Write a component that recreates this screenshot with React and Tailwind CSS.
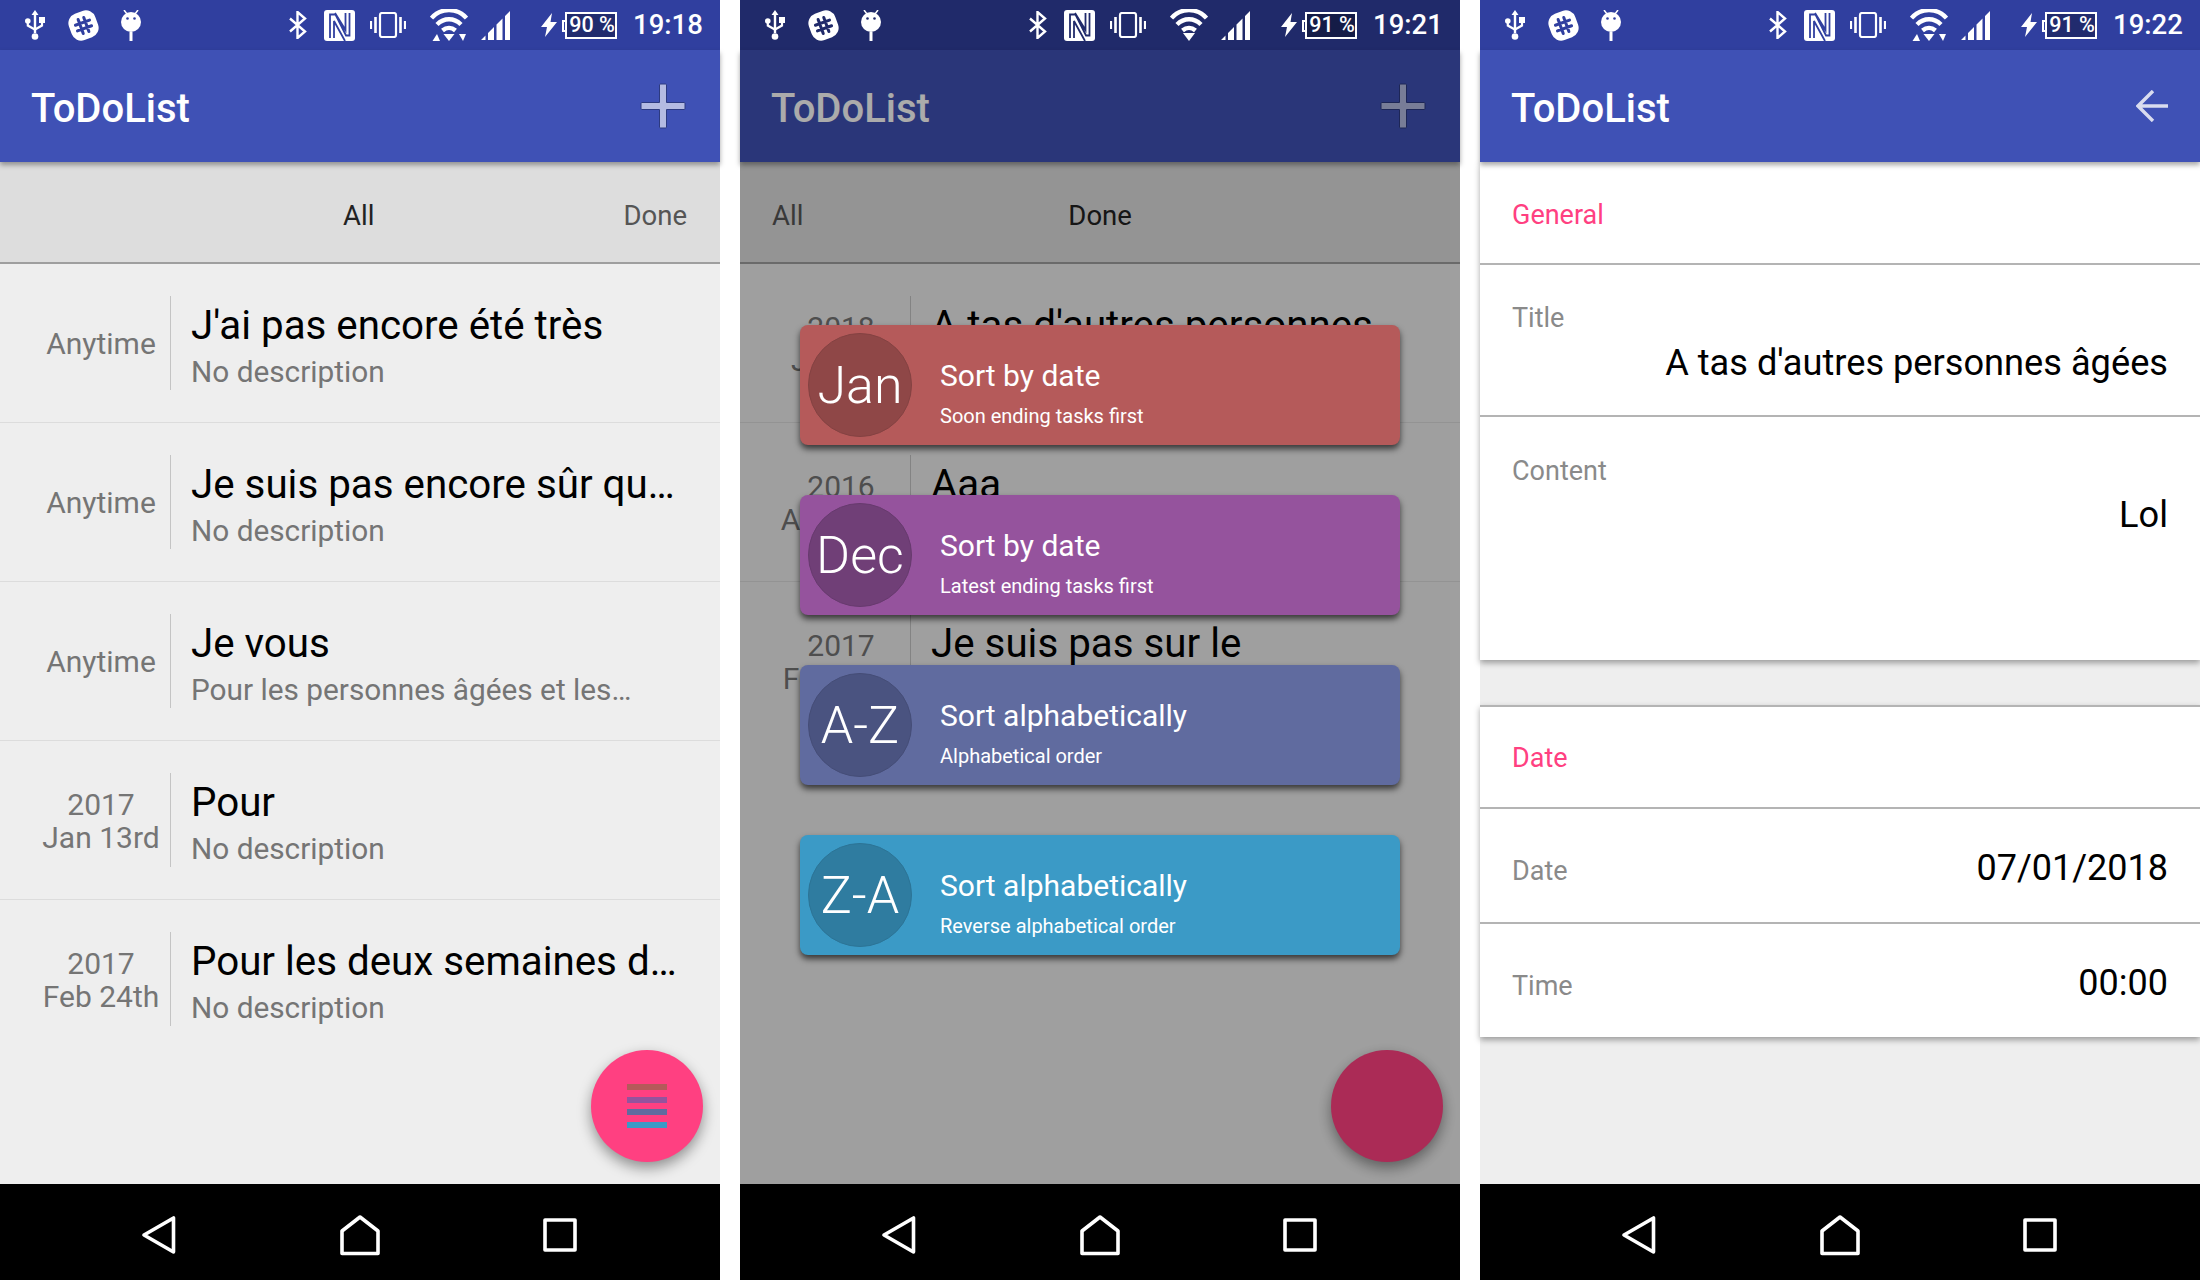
import React from "react";

const Usb = () => (
  <svg width="20" height="30" viewBox="0 0 20 30" className="ml-[25px] shrink-0">
    <path d="M10 0l3.500 5h-2.300v18h-2.400V5H6.500z" fill="#fff" />
    <circle cx="10" cy="26.500" r="3.300" fill="#fff" />
    <circle cx="2.800" cy="11" r="2.800" fill="#fff" />
    <rect x="14" y="7" width="6" height="6" fill="#fff" />
    <path d="M2.800 12v3.500l7 4M17 12v3.500l-7 4" stroke="#fff" strokeWidth="2.200" fill="none" />
  </svg>
);

const Slack = ({ bg }) => (
  <svg width="31" height="31" viewBox="0 0 31 31" className="ml-[23px] shrink-0">
    <rect x="1.500" y="1.500" width="28" height="28" rx="10" fill="#fff" transform="rotate(-20 15.500 15.500)" />
    <g transform="rotate(-20 15.500 15.500)" stroke={bg} strokeWidth="3" strokeLinecap="round">
      <path d="M12.500 8v15M18.500 8v15M8 12.500h15M8 18.500h15" />
    </g>
  </svg>
);

const Droid = ({ bg }) => (
  <svg width="20" height="31" viewBox="0 0 20 31" className="ml-[22px] shrink-0">
    <path d="M3 0l3 4M17 0l-3 4" stroke="#fff" strokeWidth="1.500" />
    <circle cx="10" cy="12" r="10" fill="#fff" />
    <circle cx="6.500" cy="8.500" r="1.300" fill={bg} />
    <circle cx="13.500" cy="8.500" r="1.300" fill={bg} />
    <rect x="8.500" y="22" width="3" height="9" fill="#fff" />
  </svg>
);

const Bluetooth = () => (
  <svg width="18" height="28" viewBox="0 0 18 28" className="shrink-0">
    <path d="M1 7.500l15 13-7.500 6.500V1l7.500 6.500-15 13" stroke="#fff" strokeWidth="2.400" fill="none" />
  </svg>
);

const Nfc = ({ bg }) => (
  <svg width="31" height="31" viewBox="0 0 31 31" className="ml-[17px] shrink-0">
    <rect width="31" height="31" rx="3" fill="#fff" />
    <path d="M6 28V4.500h5.500L22 25.500h3.500V3M10 28V11l11 20M21.500 3v17L11 3" stroke={bg} strokeWidth="1.800" fill="none" />
  </svg>
);

const Vibrate = () => (
  <svg width="36" height="26" viewBox="0 0 36 26" className="ml-[15px] shrink-0">
    <rect x="10" y="1" width="16" height="24" rx="2" stroke="#fff" strokeWidth="2.200" fill="none" />
    <path d="M5.500 5v16M30.500 5v16" stroke="#fff" strokeWidth="2.600" />
    <path d="M1 9v8M35 9v8" stroke="#fff" strokeWidth="2.200" />
  </svg>
);

const Wifi = ({ arrows }) => (
  <svg width="38" height="32" viewBox="0 0 38 32" className="ml-[24px] shrink-0">
    <path d="M1.500 9C11 -1.500 27 -1.500 36.500 9M7 15.500C14 8.500 24 8.500 31 15.500M12.500 21.500C16.500 18 21.500 18 25.500 21.500" stroke="#fff" strokeWidth="4.400" fill="none" />
    {arrows ? (
      <>
        <path d="M19 32l-5.500-7h11z" fill="#fff" />
        <path d="M7 25l-4.500 7h7.500z" fill="#fff" />
        <path d="M29 25h7l-3 7z" fill="#fff" />
      </>
    ) : (
      <path d="M19 32l-6-8h12z" fill="#fff" />
    )}
  </svg>
);

const Signal = () => (
  <svg width="29" height="29" viewBox="0 0 29 29" className="ml-[13px] shrink-0">
    <path d="M0 29l4.500-4.500V29zM7 29V22l6-6v13zM15.500 29V13.500l6-6V29zM24 29V5l5-5v29z" fill="#fff" />
  </svg>
);

const Battery = ({ label, dark }) => (
  <>
    <svg width="16" height="24" viewBox="0 0 16 24" className="ml-[31px] shrink-0">
      <path d="M11 0L0 14h6L4 24l12-15H9.500z" fill="#fff" />
    </svg>
    <div className="relative ml-[5px] h-[27px] w-[55px] shrink-0">
      <div className="absolute left-0 top-[8px] h-[12px] w-[4px] border-y-2 border-l-2 border-white" />
      <div
        className={`absolute bottom-0 left-[3px] right-0 top-0 flex items-center justify-center whitespace-nowrap border-2 border-white pl-[2px] text-[21.500px] font-medium leading-none text-white ${dark ? "bg-[#151c47]" : "bg-[#212b6e]"}`}
      >
        {label}
      </div>
    </div>
  </>
);

const StatusBar = ({ time, battery, arrows = true, dim = false }) => {
  const bg = dim ? "#202a6a" : "#303f9f";
  return (
    <div className={`flex h-[50px] shrink-0 items-center ${dim ? "bg-[#202a6a]" : "bg-[#303f9f]"}`}>
      <Usb />
      <Slack bg={bg} />
      <Droid bg={bg} />
      <div className="flex-1" />
      <Bluetooth />
      <Nfc bg={bg} />
      <Vibrate />
      <Wifi arrows={arrows} />
      <Signal />
      <Battery label={battery} dark={dim} />
      <div className="ml-[16px] mr-[18px] w-[69px] shrink-0 whitespace-nowrap text-right text-[27.500px] font-medium leading-none text-white">{time}</div>
    </div>
  );
};

const Plus = () => (
  <svg width="46" height="46" viewBox="0 0 46 46" className="shrink-0">
    <path d="M19.500 2a1 1 0 0 1 1-1h5a1 1 0 0 1 1 1v17.500h17.500a1 1 0 0 1 1 1v5a1 1 0 0 1-1 1H26.500v17.500a1 1 0 0 1-1 1h-5a1 1 0 0 1-1-1V26.500H2a1 1 0 0 1-1-1v-5a1 1 0 0 1 1-1h17.500z" fill="#b4bbe2" stroke="#2c3a80" strokeWidth="1" />
  </svg>
);

const BackArrow = () => (
  <svg width="32" height="32" viewBox="0 0 32 32" className="-mr-[2px] shrink-0">
    <path d="M32 16H3M17 1L2 16l15 15" stroke="#d9dcef" strokeWidth="3.400" fill="none" />
  </svg>
);

const Toolbar = ({ children }) => (
  <div className="relative z-10 flex h-[112px] shrink-0 items-center justify-between bg-[#3f51b5] pl-[31px] pr-[34px] shadow-[0_3px_5px_rgba(0,0,0,0.35)]">
    <div className="pt-[5px] text-[40px] font-medium leading-none text-white">ToDoList</div>
    <div className="-mt-[1px]">{children}</div>
  </div>
);

const Row = ({ year, date, title, desc, last }) => (
  <div className={`flex h-[158.900px] items-center ${last ? "" : "border-b border-[#dcdcdc]"}`}>
    <div className="ml-[31px] flex h-[94px] w-[140px] shrink-0 flex-col items-center justify-center border-r border-[#c4c4c4] pl-[1px] pt-[2px] text-[30px] leading-[33px] text-[#757575]">
      {year && <div>{year}</div>}
      <div className="whitespace-nowrap">{date}</div>
    </div>
    <div className="min-w-0 pl-[20px] pt-[6px]">
      <div className="mb-[4px] whitespace-nowrap text-[40.300px] leading-[48px] text-black">{title}</div>
      <div className="whitespace-nowrap text-[29.800px] leading-[36px] text-[#757575]">{desc}</div>
    </div>
  </div>
);

const Tabs = ({ second }) => (
  <div className="flex h-[102px] shrink-0 items-center border-b-2 border-[#9e9e9e] bg-[#dddddd] pt-[7px] text-[27.500px] leading-none">
    {second ? (
      <>
        <div className="ml-[32px] text-[#555555]">All</div>
        <div className="ml-[265px] text-[#222222]">Done</div>
      </>
    ) : (
      <>
        <div className="ml-[343px] text-[#222222]">All</div>
        <div className="ml-auto mr-[33px] text-[#555555]">Done</div>
      </>
    )}
  </div>
);

const Fab = ({ bars }) => (
  <div className="absolute left-[591px] top-[1000px] z-10 flex h-[112px] w-[112px] flex-col items-center justify-center gap-[6.500px] rounded-full bg-[#ff4081] shadow-[0_6px_14px_rgba(0,0,0,0.4)]">
    {bars && (
      <>
        <div className="h-[6px] w-[40px] bg-[#b55a5a]" />
        <div className="h-[6px] w-[40px] bg-[#95539d]" />
        <div className="h-[6px] w-[40px] bg-[#606b9f]" />
        <div className="h-[6px] w-[40px] bg-[#3b9ac6]" />
      </>
    )}
  </div>
);

const Nav = () => (
  <div className="flex h-[96px] shrink-0 items-center bg-black pl-[141px] pt-[6px]">
    <svg width="36" height="40" viewBox="0 0 36 40" className="shrink-0">
      <path d="M32.500 3v34L3 20z" stroke="#fff" strokeWidth="3.600" strokeLinejoin="round" fill="none" />
    </svg>
    <svg width="42" height="42" viewBox="0 0 42 42" className="ml-[162px] shrink-0">
      <path d="M3 39.500V17L21 3l18 14v22.500z" stroke="#fff" strokeWidth="3.600" strokeLinejoin="round" fill="none" />
    </svg>
    <svg width="34" height="34" viewBox="0 0 34 34" className="ml-[162px] shrink-0">
      <rect x="2" y="2" width="30" height="30" stroke="#fff" strokeWidth="3.600" strokeLinejoin="round" fill="none" />
    </svg>
  </div>
);

const SortCard = ({ bg, circle, ring, short, title, sub }) => (
  <div className={`flex h-[120px] items-center rounded-[8px] pl-[8px] shadow-[0_4px_6px_rgba(0,0,0,0.65)] ${bg}`}>
    <div className={`flex h-[104px] w-[104px] shrink-0 items-center justify-center whitespace-nowrap rounded-full border pt-[2px] ${circle} ${ring} text-[52px] font-light leading-none text-white`}>{short}</div>
    <div className="ml-[28px] pt-[16px] text-white">
      <div className="text-[30px] leading-[36px]">{title}</div>
      <div className="mt-[9px] text-[20px] leading-[26px]">{sub}</div>
    </div>
  </div>
);

const LeftPanel = () => (
  <div className="flex w-[720px] shrink-0 flex-col">
    <StatusBar time="19:18" battery="90 %" />
    <div className="relative flex flex-1 flex-col bg-[#eeeeee]">
      <Toolbar><Plus /></Toolbar>
      <Tabs />
      <Row date="Anytime" title="J'ai pas encore été très" desc="No description" />
      <Row date="Anytime" title="Je suis pas encore sûr qu…" desc="No description" />
      <Row date="Anytime" title="Je vous" desc="Pour les personnes âgées et les…" />
      <Row year="2017" date="Jan 13rd" title="Pour" desc="No description" />
      <Row year="2017" date="Feb 24th" title="Pour les deux semaines d…" desc="No description" last />
      <Fab bars />
    </div>
    <Nav />
  </div>
);

const MiddlePanel = () => (
  <div className="flex w-[720px] shrink-0 flex-col">
    <StatusBar time="19:21" battery="91 %" arrows={false} dim />
    <div className="relative flex flex-1 flex-col bg-[#eeeeee]">
      <Toolbar><Plus /></Toolbar>
      <Tabs second />
      <Row year="2018" date="Jan 7th" title="A tas d'autres personnes" desc="No description" />
      <Row year="2016" date="Aug 15th" title="Aaa" desc="No description" />
      <Row year="2017" date="Feb 24th" title="Je suis pas sur le" desc="No description" last />
      <Fab />
      <div className="absolute inset-0 z-20 bg-black/33" />
      <div className="absolute left-[60px] top-[275px] z-30 flex w-[600px] flex-col gap-[50px]">
        <SortCard bg="bg-[#b55a5a]" circle="bg-[#8f4747]" ring="border-[#844242]" short="Jan" title="Sort by date" sub="Soon ending tasks first" />
        <SortCard bg="bg-[#95539d]" circle="bg-[#703f77]" ring="border-[#673a6e]" short="Dec" title="Sort by date" sub="Latest ending tasks first" />
        <SortCard bg="bg-[#606b9f]" circle="bg-[#4a5380]" ring="border-[#454d77]" short="A-Z" title="Sort alphabetically" sub="Alphabetical order" />
        <SortCard bg="bg-[#3b9ac6]" circle="bg-[#2f7ca0]" ring="border-[#2c7496]" short="Z-A" title="Sort alphabetically" sub="Reverse alphabetical order" />
      </div>
    </div>
    <Nav />
  </div>
);

const Heading = ({ children, h, pad }) => (
  <div className={`flex items-center border-b-2 border-[#b4b4b4] pl-[32px] text-[27px] leading-none text-[#ff4081] ${h} ${pad}`}>{children}</div>
);

const FieldRow = ({ label, value, border = true, h }) => (
  <div className={`flex items-center justify-between pl-[32px] pr-[32px] ${border ? "border-b-2 border-[#b4b4b4]" : ""} ${h}`}>
    <div className="pt-[11px] text-[27px] leading-none text-[#8a8a8a]">{label}</div>
    <div className="pt-[5px] text-[36px] leading-none text-black">{value}</div>
  </div>
);

const RightPanel = () => (
  <div className="flex w-[720px] shrink-0 flex-col">
    <StatusBar time="19:22" battery="91 %" />
    <div className="flex flex-1 flex-col bg-[#eeeeee]">
      <Toolbar><BackArrow /></Toolbar>
      <div className="relative shrink-0 bg-white shadow-[0_3px_6px_rgba(0,0,0,0.35)]">
        <Heading h="h-[103px]" pad="pt-[6px]">General</Heading>
        <div className="h-[152px] border-b-2 border-[#b4b4b4] pl-[32px] pr-[32px] pt-[35px]">
          <div className="text-[27px] leading-[36px] text-[#8a8a8a]">Title</div>
          <div className="mt-[5px] text-right text-[36.200px] leading-[44px] text-black">A tas d'autres personnes âgées</div>
        </div>
        <div className="h-[243px] pl-[32px] pr-[32px] pt-[36px]">
          <div className="text-[27px] leading-[36px] text-[#8a8a8a]">Content</div>
          <div className="mt-[4px] text-right text-[36.200px] leading-[44px] text-black">Lol</div>
        </div>
      </div>
      <div className="mt-[45px] shrink-0 border-t-2 border-[#b4b4b4] bg-white shadow-[0_3px_6px_rgba(0,0,0,0.35)]">
        <Heading h="h-[102px]" pad="pt-[3px]">Date</Heading>
        <FieldRow label="Date" value="07/01/2018" h="h-[115px]" />
        <FieldRow label="Time" value="00:00" border={false} h="h-[113px]" />
      </div>
    </div>
    <Nav />
  </div>
);

export default function App() {
  return (
    <div className="flex h-[1280px] w-[2200px] gap-[20px] bg-white font-[Roboto]">
      <LeftPanel />
      <MiddlePanel />
      <RightPanel />
    </div>
  );
}
